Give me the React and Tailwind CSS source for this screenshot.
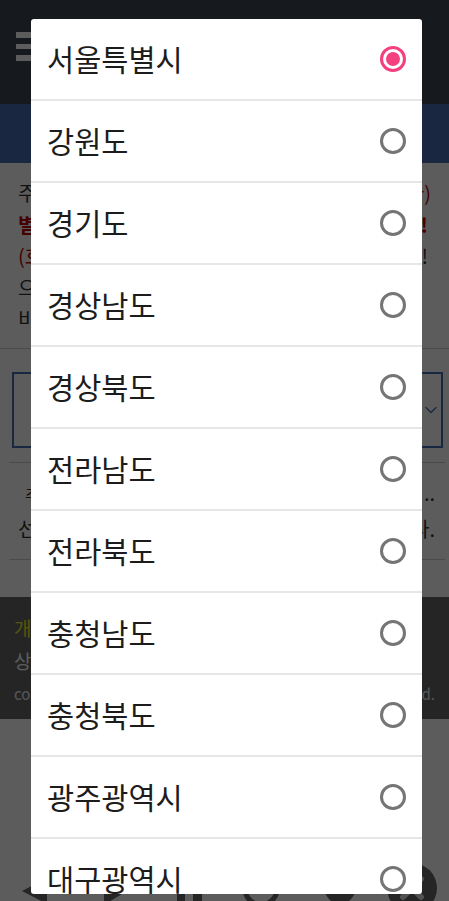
import React from 'react';
import { ChevronDown, X } from 'lucide-react';

const regions = ['서울특별시', '강원도', '경기도', '경상남도', '경상북도', '전라남도', '전라북도', '충청남도', '충청북도', '광주광역시', '대구광역시'];

const Line = ({ left, right, className = '' }) => (
  <div className={`flex justify-between ${className}`}>
    <span>{left}</span>
    <span>{right}</span>
  </div>
);

const Radio = ({ checked }) => (
  <div className={`flex h-[26px] w-[26px] items-center justify-center rounded-full border-[3px] ${checked ? 'border-[#f4407f]' : 'border-[#757575]'}`}>
    {checked && <div className="h-[14px] w-[14px] rounded-full bg-[#f4407f]" />}
  </div>
);

const RegionDialog = () => (
  <div className="absolute left-[31px] top-[19px] h-[875px] w-[391px] overflow-hidden rounded-[3px] bg-white">
    {regions.map((name, i) => (
      <div key={name} className="flex h-[82px] items-center justify-between border-b-2 border-[#e6e6e6] pl-4 pr-[16px]">
        <span className="mb-px text-[29.5px] leading-none text-[#1c1c1c]">{name}</span>
        <Radio checked={i === 0} />
      </div>
    ))}
  </div>
);

// bottom toolbar, only its lower edge shows under the dialog
const Toolbar = () => (
  <div className="absolute left-[18px] top-[875px] flex text-[#676767]">
    <svg viewBox="0 0 40 40" className="h-10 w-10" fill="currentColor">
      <polygon points="4,16 29,3 29,29" />
    </svg>
    <svg viewBox="0 0 40 40" className="ml-[34px] h-10 w-10" fill="currentColor">
      <polygon points="12,-1 38,14 12,30" />
    </svg>
    <svg viewBox="0 0 40 40" className="ml-[38px] h-10 w-10" fill="currentColor">
      <rect x="7" y="0" width="8" height="40" />
      <rect x="23" y="0" width="9" height="40" />
    </svg>
    <svg viewBox="0 0 40 40" className="ml-[32px] h-10 w-10" fill="none" stroke="currentColor" strokeWidth="5">
      <path d="M35 14 A16 16 0 1 1 30 2" />
    </svg>
    <svg viewBox="0 0 40 40" className="ml-[38px] h-10 w-10" fill="currentColor">
      <circle cx="20" cy="14" r="15" />
    </svg>
  </div>
);

export default function App() {
  return (
    <div className="relative h-[901px] w-[449px] overflow-hidden bg-white font-['Noto_Sans_CJK_KR','Noto_Sans',sans-serif]">
      {/* page behind the dialog */}
      <header className="flex h-[104px] items-center bg-[#3d4655] pb-[11px] pl-4">
        <div className="flex w-[32px] flex-col gap-[6px]">
          <div className="h-[5.5px] bg-white" />
          <div className="h-[5.5px] bg-white" />
          <div className="h-[5.5px] bg-white" />
        </div>
      </header>
      <div className="h-[59px] bg-[#486cb2]" />

      <section className="border-b border-[#cccccc] px-[18px] pb-[13px] pt-[14px] text-[20px] leading-[31.5px] text-[#333333]">
        <Line left="주" right={<span className="text-[#c00000]">나)</span>} />
        <Line left="별" right={<span className="pr-[3px]">!</span>} className="font-bold text-[#c00000]" />
        <Line left="(호" right={<span className="pr-[3px] text-[#333333]">!</span>} className="text-[#c00000]" />
        <Line left="으" right="" />
        <Line left="비" right="" />
      </section>

      <div className="ml-3 mt-[23px] flex h-[76px] w-[431px] items-center justify-end border-2 border-[#486cb2]">
        <ChevronDown className="h-5 w-5 text-[#486cb2]" strokeWidth={1.5} />
      </div>

      <section className="ml-[9px] mt-[14px] w-[436px] border-y border-[#cccccc] py-[13px] pl-[9px] pr-[10px] text-[20px] leading-[34px] text-[#333333]">
        <Line left={<span className="pl-[7px] text-[15px]">주</span>} right=".." />
        <Line left="선" right="다." />
      </section>

      <footer className="mt-[37px] h-[122px] bg-[#676767] px-[14px] pt-[15px]">
        <div className="text-[19px] leading-[32px] text-[#f0e828]">개</div>
        <div className="text-[19px] leading-[34px] text-white">상</div>
        <Line left="co" right="d." className="text-[15px] leading-[32px] text-[#eeeeee]" />
      </footer>

      <Toolbar />
      <div className="absolute left-[387px] top-[863px] flex h-[50px] w-[50px] items-center justify-center rounded-full bg-[#676767] text-[#e0e0e0]">
        <X className="h-9 w-9" strokeWidth={4} />
      </div>

      <div className="absolute inset-0 bg-[rgba(0,0,0,0.64)]" />
      <RegionDialog />
    </div>
  );
}
